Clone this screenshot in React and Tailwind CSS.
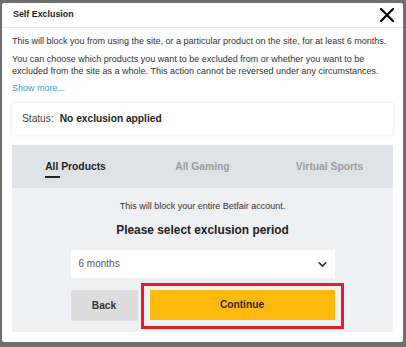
import React, { useState } from "react";
import { X, ChevronDown } from "lucide-react";

const tabs = ["All Products", "All Gaming", "Virtual Sports"];

const SelfExclusion = () => {
  const [active, setActive] = useState(0);

  return (
    <div className="w-[406px] h-[347px] bg-[#6f6f6f] pt-[3px] pl-[2px] overflow-hidden" style={{ fontFamily: '"Liberation Sans", Arial, sans-serif' }}>
      <div className="w-[401px] h-[339px] bg-white rounded-[2px] flex flex-col">
        {/* header */}
        <div className="h-[25px] pl-[11px] pr-[4px] flex items-center justify-between border-b border-[#e8e8e8]">
          <span className="text-[8.9px] font-bold text-[#222]">Self Exclusion</span>
          <X size={24} strokeWidth={2.2} className="text-black" />
        </div>

        <div className="px-[10px] text-[9px] leading-[12px] text-[#333]">
          <p className="mt-[7px]">This will block you from using the site, or a particular product on the site, for at least 6 months.</p>
          <p className="mt-[6px]">You can choose which products you want to be excluded from or whether you want to be excluded from the site as a whole. This action cannot be reversed under any circumstances.</p>
          <p className="mt-[5px] text-[#3a9be0]">Show more...</p>

          {/* status */}
          <div className="mt-[9px] h-[32px] flex items-center gap-[6px] px-[10px] rounded-[2px] shadow-[0_0_3px_rgba(0,0,0,0.12)]">
            <span className="text-[10.2px] text-[#444]">Status:</span>
            <span className="text-[10.2px] font-bold text-[#1e1e1e]">No exclusion applied</span>
          </div>

          {/* tabs panel */}
          <div className="mt-[10px] rounded-[2px] bg-[#eef0f3]">
            <div className="h-[43px] bg-[#dfe3e8] grid grid-cols-3 items-center">
              {tabs.map((t, i) => (
                <button
                  key={t}
                  onClick={() => setActive(i)}
                  className={`justify-self-center relative text-[10.3px] font-bold ${i === active ? "text-[#222]" : "text-[#9a9ca0]"}`}
                >
                  {t}
                  {i === active && <span className="absolute left-0 top-[15px] w-[15px] h-[2px] bg-[#222]" />}
                </button>
              ))}
            </div>

            <div className="flex flex-col items-center">
              <p className="mt-[13px] text-[9px] leading-[10px] text-[#333]">This will block your entire Betfair account.</p>
              <p className="mt-[12px] text-[11.9px] font-bold text-[#222] leading-[14px]">Please select exclusion period</p>

              <div className="mt-[13px] w-[264px] h-[28px] bg-white flex items-center justify-between pl-[8px] pr-[6px]">
                <span className="text-[10px] text-[#555]">6 months</span>
                <ChevronDown size={13} strokeWidth={3} className="text-[#333]" />
              </div>

              <div className="mt-[12px] mb-[11px] w-[264px] flex gap-[12px]">
                <button className="w-[67px] h-[31px] bg-[#dcdcdc] rounded-[2px] text-[10.2px] font-bold text-[#333]">Back</button>
                <div className="relative flex-1">
                  <button className="w-full h-[30px] bg-[#ffb80c] rounded-[1px] text-[10.2px] font-bold text-[#2a2a2a]">Continue</button>
                  <div className="absolute -left-[9px] -right-[9px] -top-[7px] -bottom-[8px] border-[3px] border-[#e01f2b]" />
                </div>
              </div>
            </div>
          </div>
        </div>
      </div>
    </div>
  );
};

export default function App() {
  return <SelfExclusion />;
}
